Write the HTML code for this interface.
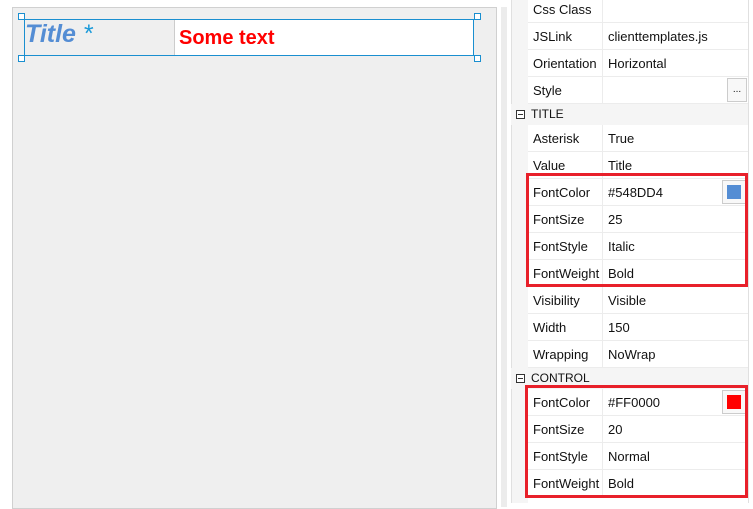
<!DOCTYPE html>
<html><head><meta charset="utf-8"><style>
body{margin:0;width:753px;height:503px;background:#fff;position:relative;overflow:hidden;font-family:"Segoe UI","Liberation Sans",sans-serif;font-size:13px;color:#111}
.a{position:absolute}
.row{position:absolute;left:528px;width:220px;height:26px;border-bottom:1px solid #ececec;background:#fff}
.row .k{position:absolute;left:5px;top:6px}
.row .v{position:absolute;left:80px;top:6px}
.row .sep{position:absolute;left:74px;top:0;width:1px;height:27px;background:#ececec}
.hdr{position:absolute;left:511px;width:237px;height:21px;background:#f5f5f5}
.hdr span{position:absolute;left:20px;top:3px;font-size:12px}
.hdr i{position:absolute;left:5px;top:6px;width:7px;height:7px;border:1px solid #333;background:#fff}
.hdr i:after{content:"";position:absolute;left:1px;top:3px;width:5px;height:1px;background:#333}
.h{position:absolute;width:5px;height:5px;border:1px solid #1a8fd0;background:#fff}
</style></head><body>
<div class="a" style="left:12px;top:7px;width:483px;height:500px;background:#efefef;border:1px solid #d0d0d0"></div>
<div class="a" style="left:501px;top:7px;width:6px;height:500px;background:#ececec"></div>
<div class="a" style="left:511px;top:0;width:1px;height:503px;background:#e0e0e0"></div>
<div class="a" style="left:512px;top:0;width:16px;height:503px;background:#f5f5f5"></div>
<div class="a" style="left:24px;top:19px;width:448px;height:35px;border:1px solid #1a8fd0;background:#fff"></div>
<div class="a" style="left:25px;top:20px;width:149px;height:35px;background:#efefef;border-right:1px solid #ccc"></div>
<div class="a" style="left:25px;top:20px;font-size:25px;font-style:italic;font-weight:bold;color:#548DD4">Title <span style="color:#1a9ad9;font-weight:normal">*</span></div>
<div class="a" style="left:179px;top:27px;font-size:20px;font-weight:bold;color:#f00">Some text</div>
<div class="h" style="left:18px;top:13px"></div><div class="h" style="left:474px;top:13px"></div>
<div class="h" style="left:18px;top:55px"></div><div class="h" style="left:474px;top:55px"></div>

<div class="row" style="top:-4px"><span class="sep"></span><span class="k">Css Class</span></div>
<div class="row" style="top:23px"><span class="sep"></span><span class="k">JSLink</span><span class="v">clienttemplates.js</span></div>
<div class="row" style="top:50px"><span class="sep"></span><span class="k">Orientation</span><span class="v">Horizontal</span></div>
<div class="row" style="top:77px"><span class="sep"></span><span class="k">Style</span><div class="a" style="left:199px;top:1px;width:18px;height:22px;border:1px solid #ccc;background:#f8f8f8;font-size:10px;text-align:center;line-height:22px">...</div></div>
<div class="hdr" style="top:104px"><i></i><span>TITLE</span></div>
<div class="row" style="top:125px"><span class="sep"></span><span class="k">Asterisk</span><span class="v">True</span></div>
<div class="row" style="top:152px"><span class="sep"></span><span class="k">Value</span><span class="v">Title</span></div>
<div class="row" style="top:179px"><span class="sep"></span><span class="k">FontColor</span><span class="v">#548DD4</span><div class="a" style="left:194px;top:1px;width:22px;height:22px;border:1px solid #ccc;background:#f8f8f8"><div style="margin:4px;width:14px;height:14px;background:#548DD4"></div></div></div>
<div class="row" style="top:206px"><span class="sep"></span><span class="k">FontSize</span><span class="v">25</span></div>
<div class="row" style="top:233px"><span class="sep"></span><span class="k">FontStyle</span><span class="v">Italic</span></div>
<div class="row" style="top:260px"><span class="sep"></span><span class="k">FontWeight</span><span class="v">Bold</span></div>
<div class="row" style="top:287px"><span class="sep"></span><span class="k">Visibility</span><span class="v">Visible</span></div>
<div class="row" style="top:314px"><span class="sep"></span><span class="k">Width</span><span class="v">150</span></div>
<div class="row" style="top:341px"><span class="sep"></span><span class="k">Wrapping</span><span class="v">NoWrap</span></div>
<div class="hdr" style="top:368px"><i></i><span>CONTROL</span></div>
<div class="row" style="top:389px"><span class="sep"></span><span class="k">FontColor</span><span class="v">#FF0000</span><div class="a" style="left:194px;top:1px;width:22px;height:22px;border:1px solid #ccc;background:#f8f8f8"><div style="margin:4px;width:14px;height:14px;background:#f00"></div></div></div>
<div class="row" style="top:416px"><span class="sep"></span><span class="k">FontSize</span><span class="v">20</span></div>
<div class="row" style="top:443px"><span class="sep"></span><span class="k">FontStyle</span><span class="v">Normal</span></div>
<div class="row" style="top:470px"><span class="sep"></span><span class="k">FontWeight</span><span class="v">Bold</span></div>
<div class="a" style="left:748px;top:0;width:1px;height:503px;background:#e0e0e0"></div>
<div class="a" style="left:526px;top:173px;width:216px;height:108px;border:3px solid #e8202a"></div>
<div class="a" style="left:525px;top:385px;width:217px;height:107px;border:3px solid #e8202a"></div>
</body></html>
